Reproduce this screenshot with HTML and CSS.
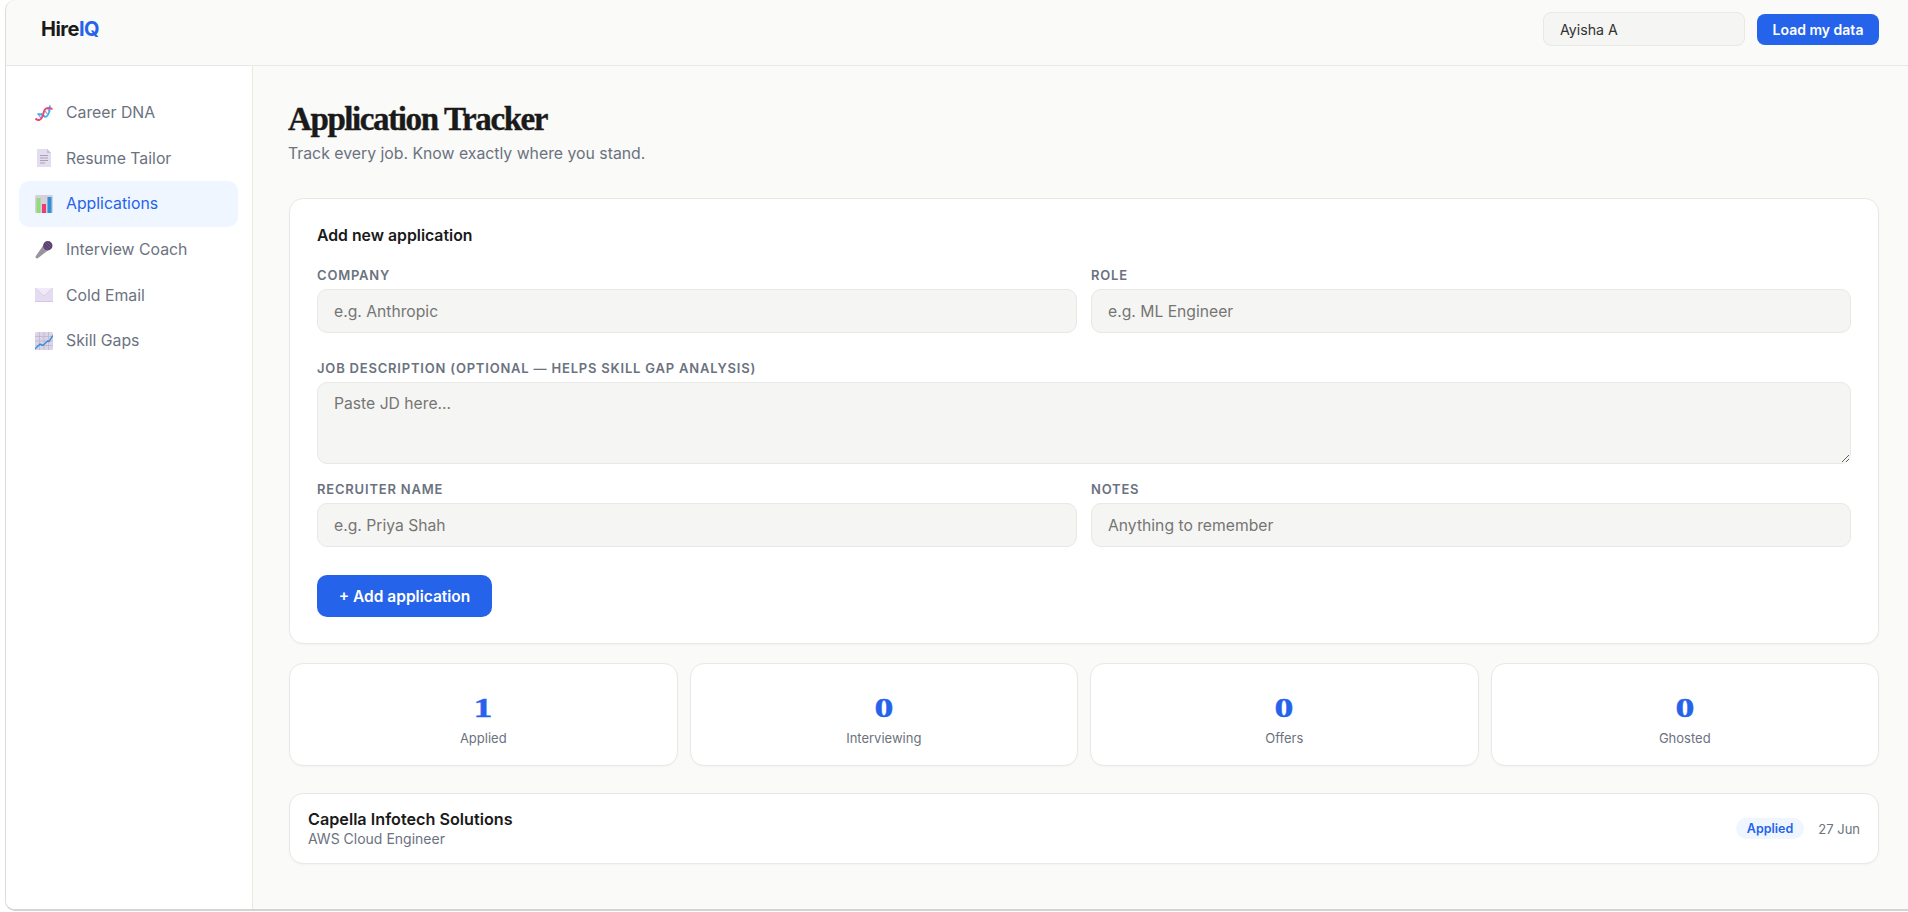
FILE: index.html
```html
<!DOCTYPE html>
<html lang="en">
<head>
    <meta charset="UTF-8">
    <meta name="viewport" content="width=device-width, initial-scale=1.0">
    <title>HireIQ</title>
    <link rel="stylesheet" href="styles.css">
</head>
<body>
    <div class="app">
        <header class="topbar">
            <div class="logo">Hire<span>IQ</span></div>
            <div class="topbar-right">
                <input type="text" class="name-input" value="Ayisha A">
                <button class="load-btn">Load my data</button>
            </div>
        </header>

        <div class="layout">
            <nav class="sidebar">
                <a class="nav-item">
                    <svg class="nav-icon" viewBox="0 0 18 18">
                        <path d="M3.500 10.500L6.500 15M6 9L9.500 13M9 6L12.500 10M12 4L15 8" stroke="#9d8ab8" stroke-width="1.100"/>
                        <path d="M2.500 10C5 10 7 10 9 12S13 11.500 14 8.500S14.500 3 15 1.500" fill="none" stroke="#38b6e8" stroke-width="1.800"/>
                        <path d="M0.500 14.500C3 17 6 16.500 7.500 12.500S8.500 6 11 4.500S15 4.500 17.500 5" fill="none" stroke="#f0457a" stroke-width="2"/>
                    </svg>
                    Career DNA
                </a>
                <a class="nav-item">
                    <svg class="nav-icon" viewBox="0 0 18 18">
                        <path d="M2 0H12L16 4V18H2Z" fill="#e4dcef"/>
                        <path d="M12 0L16 4H12Z" fill="#c6bcd6"/>
                        <path d="M5 6.500H13M5 9H13M5 11.500H13M5 14H10" stroke="#a9a2b5" stroke-width="1"/>
                    </svg>
                    Resume Tailor
                </a>
                <a class="nav-item active">
                    <svg class="nav-icon" viewBox="0 0 18 18">
                        <rect width="18" height="18" rx="1.500" fill="#d5d0da"/>
                        <rect x="1.500" y="3" width="4" height="15" fill="#8fdc78"/>
                        <rect x="7" y="9" width="4" height="9" fill="#ef3a78"/>
                        <rect x="12.500" y="2" width="4" height="16" fill="#2f8fd8"/>
                    </svg>
                    Applications
                </a>
                <a class="nav-item">
                    <svg class="nav-icon" viewBox="0 0 18 18">
                        <path d="M8.500 4L13.500 9L2.500 17.500C1.800 18 0 16.500 0.500 15.500Z" fill="#9a949e"/>
                        <circle cx="12.800" cy="4.700" r="4.700" fill="#5a3f73"/>
                        <path d="M10 2l5.500 5.500M12 1l4.500 4.500M9 4.500l4.500 4.500" stroke="#8a739c" stroke-width=".6"/>
                    </svg>
                    Interview Coach
                </a>
                <a class="nav-item">
                    <svg class="nav-icon" viewBox="0 0 18 18">
                        <rect y="2" width="18" height="14" fill="#e6dcf2"/>
                        <path d="M0 2L9 10L18 2" fill="#f0e9f7" stroke="#d4c8e2" stroke-width=".7"/>
                        <rect y="15" width="18" height="1" fill="#d6c6ea"/>
                    </svg>
                    Cold Email
                </a>
                <a class="nav-item">
                    <svg class="nav-icon" viewBox="0 0 18 18">
                        <rect width="18" height="18" rx="1.500" fill="#dbd3e6"/>
                        <path d="M4.500 0V18M9 0V18M13.500 0V18M0 4.500H18M0 9H18M0 13.500H18" stroke="#b9aec9" stroke-width=".6"/>
                        <path d="M0 17L5 12L8 13.500L12.500 9L14 9.500L18 3.500" fill="none" stroke="#2f8fd8" stroke-width="1.400"/>
                    </svg>
                    Skill Gaps
                </a>
            </nav>

            <main class="main">
                <div class="page-head">
                    <h1 class="page-title">Application Tracker</h1>
                    <p class="page-sub">Track every job. Know exactly where you stand.</p>
                </div>

                <section class="card form-card">
                    <h2 class="card-title">Add new application</h2>
                    <div class="form-row">
                        <div class="field">
                            <label>Company</label>
                            <input type="text" placeholder="e.g. Anthropic">
                        </div>
                        <div class="field">
                            <label>Role</label>
                            <input type="text" placeholder="e.g. ML Engineer">
                        </div>
                    </div>
                    <div class="field field-wide">
                        <label>Job description (optional — helps skill gap analysis)</label>
                        <textarea placeholder="Paste JD here..."></textarea>
                    </div>
                    <div class="form-row form-row-last">
                        <div class="field">
                            <label>Recruiter name</label>
                            <input type="text" placeholder="e.g. Priya Shah">
                        </div>
                        <div class="field">
                            <label>Notes</label>
                            <input type="text" placeholder="Anything to remember">
                        </div>
                    </div>
                    <button class="add-btn">+ Add application</button>
                </section>

                <section class="stats">
                    <div class="card stat"><div class="stat-num">1</div><div class="stat-label">Applied</div></div>
                    <div class="card stat"><div class="stat-num">0</div><div class="stat-label">Interviewing</div></div>
                    <div class="card stat"><div class="stat-num">0</div><div class="stat-label">Offers</div></div>
                    <div class="card stat"><div class="stat-num">0</div><div class="stat-label">Ghosted</div></div>
                </section>

                <section class="card app-row">
                    <div>
                        <div class="app-company">Capella Infotech Solutions</div>
                        <div class="app-role">AWS Cloud Engineer</div>
                    </div>
                    <div class="app-meta">
                        <span class="badge">Applied</span>
                        <span class="app-date">27 Jun</span>
                    </div>
                </section>
            </main>
        </div>
    </div>
</body>
</html>
```

FILE: styles.css
```css
* {
    margin: 0;
    padding: 0;
    box-sizing: border-box;
}

body {
    font-family: Inter, "Liberation Sans", sans-serif;
    background-color: #ffffff;
    color: #1a1a1a;
    height: 912px;
    overflow: hidden;
    padding: 0 0 1px 5px;
}

.app {
    height: 911px;
    background-color: #fafaf8;
    border-left: 1px solid #dcdcd9;
    border-bottom: 2px solid #d4d4d2;
    border-radius: 10px 0 0 10px;
    display: flex;
    flex-direction: column;
    overflow: hidden;
}

.topbar {
    height: 66px;
    flex-shrink: 0;
    padding: 0 29px 7px 35px;
    border-bottom: 1px solid #e8e8e4;
    display: flex;
    justify-content: space-between;
    align-items: center;
}

.logo {
    font-size: 20px;
    font-weight: 700;
    letter-spacing: -0.5px;
}

.logo span {
    color: #2563eb;
}

.topbar-right {
    display: flex;
    align-items: center;
    gap: 12px;
}

.name-input {
    width: 202px;
    height: 34px;
    padding: 0 16px;
    font-family: inherit;
    font-size: 14.200px;
    color: #333333;
    background-color: #f5f5f3;
    border: 1px solid #e8e8e4;
    border-radius: 8px;
}

.load-btn {
    width: 122px;
    height: 31px;
    font-family: inherit;
    font-size: 14px;
    font-weight: 600;
    color: white;
    background-color: #2563eb;
    border: none;
    border-radius: 8px;
}

.layout {
    flex: 1;
    display: flex;
    min-height: 0;
}

.sidebar {
    width: 247px;
    flex-shrink: 0;
    padding: 24px 14px 24px 13px;
    background-color: white;
    border-right: 1px solid #e8e8e4;
}

.nav-item {
    display: flex;
    align-items: center;
    gap: 13px;
    height: 45.600px;
    padding: 0 16px;
    font-size: 15.800px;
    color: #6b7280;
    border-radius: 10px;
}

.nav-item.active {
    background-color: #eff6ff;
    color: #2563eb;
}

.nav-icon {
    width: 18px;
    height: 18px;
    flex-shrink: 0;
}

.main {
    flex: 1;
    padding: 33px 29px 0 36px;
}

.page-head {
    margin-left: -1px;
}

.page-title {
    font-family: "Liberation Serif", serif;
    font-size: 33px;
    font-weight: 700;
    line-height: 40px;
    letter-spacing: -1.400px;
    -webkit-text-stroke: 0.4px #1a1a1a;
}

.page-sub {
    margin-top: 4px;
    font-size: 15.800px;
    line-height: 22px;
    color: #6b7280;
}

.card {
    background-color: white;
    border: 1px solid #e8e8e4;
    border-radius: 14px;
    box-shadow: 0 1px 2px rgba(0, 0, 0, 0.03);
}

.form-card {
    margin-top: 33px;
    padding: 27px 27px 26px;
}

.card-title {
    font-size: 15.800px;
    font-weight: 600;
    line-height: 20px;
    margin-bottom: 21px;
}

.form-row {
    display: grid;
    grid-template-columns: 1fr 1fr;
    gap: 14px;
    margin-bottom: 27px;
}

.form-row-last {
    margin-bottom: 28px;
}

.field {
    display: flex;
    flex-direction: column;
}

.field-wide {
    margin-bottom: 17px;
}

.field label {
    font-size: 13px;
    font-weight: 600;
    line-height: 16px;
    letter-spacing: 0.800px;
    text-transform: uppercase;
    color: #6b7280;
    margin-bottom: 6px;
}

.field input,
.field textarea {
    width: 100%;
    font-family: inherit;
    font-size: 15.700px;
    background-color: #f5f5f3;
    border: 1px solid #e8e8e4;
    border-radius: 10px;
    padding: 0 16px;
}

.field input {
    height: 44px;
}

.field textarea {
    display: block;
    height: 82px;
    padding: 11px 16px;
    resize: vertical;
}

.add-btn {
    display: block;
    width: 175px;
    height: 42px;
    font-family: inherit;
    font-size: 15.500px;
    font-weight: 600;
    color: white;
    background-color: #2563eb;
    border: none;
    border-radius: 10px;
}

.stats {
    margin-top: 19px;
    display: grid;
    grid-template-columns: repeat(4, 1fr);
    gap: 12px;
}

.stat {
    height: 103px;
    padding-top: 9px;
    display: flex;
    flex-direction: column;
    align-items: center;
    justify-content: center;
}

.stat-num {
    font-family: "Liberation Serif", serif;
    font-size: 28px;
    font-weight: 700;
    line-height: 32px;
    color: #2563eb;
    -webkit-text-stroke: 0.4px #2563eb;
    transform: scaleX(1.35);
}

.stat-label {
    margin-top: 5px;
    font-size: 13px;
    line-height: 18px;
    color: #6b7280;
}

.app-row {
    margin-top: 27px;
    height: 71px;
    padding: 0 18px;
    display: flex;
    justify-content: space-between;
    align-items: center;
}

.app-company {
    font-size: 16.200px;
    font-weight: 600;
    line-height: 20px;
}

.app-role {
    font-size: 14px;
    line-height: 20px;
    color: #6b7280;
}

.app-meta {
    display: flex;
    align-items: center;
    gap: 14px;
}

.badge {
    padding: 2px 11px;
    font-size: 12.500px;
    font-weight: 600;
    line-height: 17px;
    color: #2563eb;
    background-color: #eff6ff;
    border-radius: 12px;
}

.app-date {
    font-size: 13px;
    color: #6b7280;
}
```
